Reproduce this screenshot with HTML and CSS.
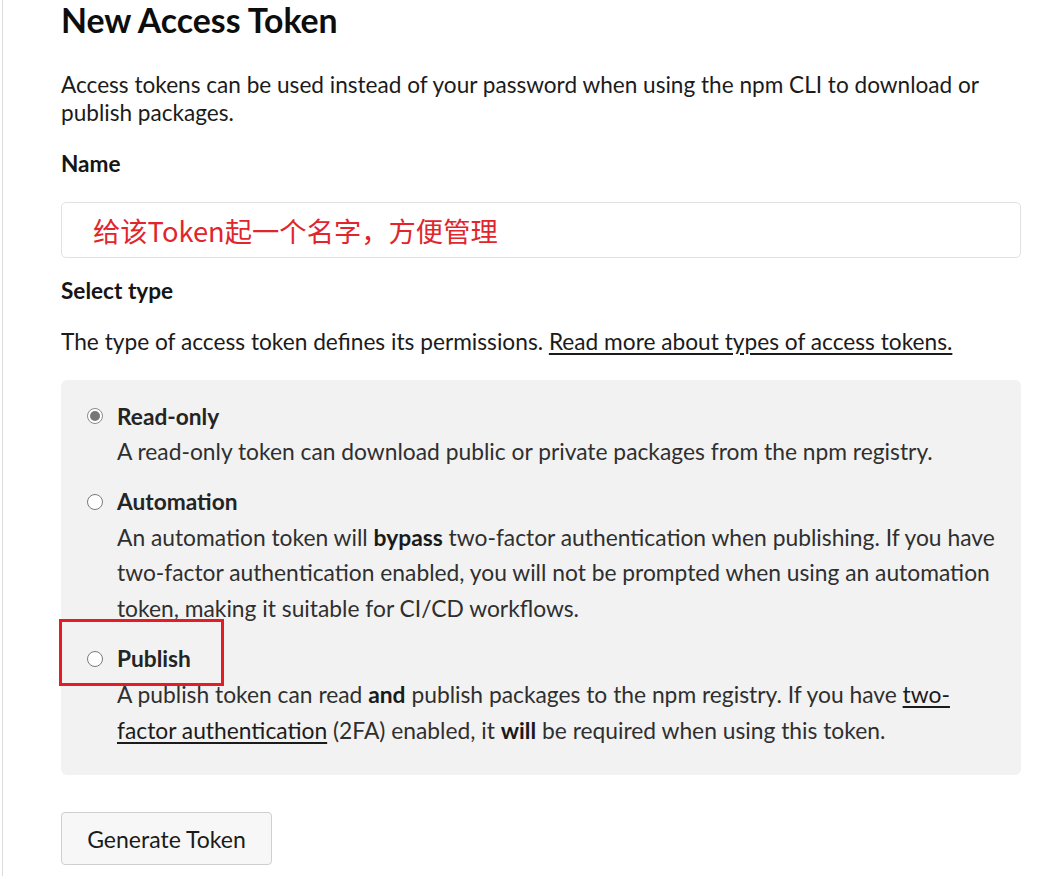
FILE: index.html
```html
<!DOCTYPE html>
<html lang="en">
<head>
<meta charset="utf-8">
<title>New Access Token</title>
<link rel="stylesheet" href="styles.css">
</head>
<body>
<div class="page">
  <main class="content">
    <h1 class="title">New Access Token</h1>
    <p class="intro">Access tokens can be used instead of your password when using the npm CLI to download or publish packages.</p>

    <label class="field-label">Name</label>
    <div class="text-input"><span class="annot-text">给该Token起一个名字，方便管理</span></div>

    <div class="field-label type-label">Select type</div>
    <p class="type-desc">The type of access token defines its permissions. <a class="link" href="#">Read more about types of access tokens.</a></p>

    <div class="options">
      <div class="option">
        <div class="option-head"><span class="radio checked"></span><span class="option-name">Read-only</span></div>
        <p class="option-desc">A read-only token can download public or private packages from the npm registry.</p>
      </div>
      <div class="option">
        <div class="option-head"><span class="radio"></span><span class="option-name">Automation</span></div>
        <p class="option-desc">An automation token will <b>bypass</b> two-factor authentication when publishing. If you have two-factor authentication enabled, you will not be prompted when using an automation token, making it suitable for CI/CD workflows.</p>
      </div>
      <div class="option">
        <div class="option-head"><span class="radio"></span><span class="option-name">Publish</span></div>
        <p class="option-desc">A publish token can read <b>and</b> publish packages to the npm registry. If you have <a class="link" href="#">two-factor authentication</a> (2FA) enabled, it <b>will</b> be required when using this token.</p>
      </div>
      <div class="highlight"></div>
    </div>

    <button class="btn">Generate Token</button>
  </main>
</div>
</body>
</html>
```

FILE: styles.css
```css
html, body {
  margin: 0;
  padding: 0;
  background: #fff;
}
body {
  font-family: Lato, "Liberation Sans", "Noto Sans CJK SC", sans-serif;
  color: #1b1b1b;
}
.page {
  margin-left: 2px;
  border-left: 1px solid #dcdcdc;
  min-height: 876px;
}
.content {
  width: 960px;
  padding-left: 58px;
  display: flex;
  flex-direction: column;
  align-items: flex-start;
}
.title {
  margin: 0;
  font-size: 33.8px;
  line-height: 40px;
  font-weight: 700;
  color: #0d0d0d;
  letter-spacing: 0;
}
.intro {
  margin: 31px 0 0;
  font-size: 22.6px;
  line-height: 28px;
}
.field-label {
  margin-top: 23px;
  font-size: 22.6px;
  line-height: 28px;
  font-weight: 700;
  color: #151515;
}
.text-input {
  margin-top: 24px;
  box-sizing: border-box;
  width: 960px;
  height: 56px;
  border: 1px solid #e2e2e2;
  border-radius: 5px;
  padding-left: 31px;
  display: flex;
  align-items: center;
}
.annot-text {
  font-family: "Noto Sans CJK SC", sans-serif;
  font-size: 27.3px;
  color: #e0262c;
  line-height: 34px;
}
.type-label {
  margin-top: 19px;
}
.type-desc {
  margin: 23px 0 0;
  font-size: 22.7px;
  line-height: 28px;
}
.link {
  color: #1b1b1b;
  text-decoration: underline;
  text-underline-offset: 3px;
}
.options {
  position: relative;
  margin-top: 24px;
  box-sizing: border-box;
  width: 960px;
  background: #f2f2f2;
  border-radius: 6px;
  padding: 18px 20px 27px 26px;
  display: flex;
  flex-direction: column;
  gap: 14px;
}
.option-head {
  display: flex;
  align-items: center;
  height: 36px;
}
.radio {
  box-sizing: border-box;
  width: 16px;
  height: 16px;
  border: 1px solid #7a7a7a;
  border-radius: 50%;
  background: #fff;
  margin-right: 14px;
  position: relative;
  flex: none;
}
.radio.checked {
  border-color: #8a8a8a;
}
.radio.checked::after {
  content: "";
  position: absolute;
  left: 2px;
  top: 2px;
  width: 10px;
  height: 10px;
  border-radius: 50%;
  background: #777;
}
.option-name {
  font-size: 22.7px;
  font-weight: 700;
  color: #242424;
}
.option-desc {
  margin: 0 0 0 30px;
  font-size: 22.8px;
  line-height: 35.7px;
  color: #2f2f2f;
}
.option-desc b {
  color: #1a1a1a;
}
.highlight {
  position: absolute;
  left: -2px;
  top: 239px;
  width: 159px;
  height: 61px;
  border: 3px solid #e41c23;
}
.btn {
  margin-top: 37px;
  box-sizing: border-box;
  width: 211px;
  height: 53px;
  background: #f7f7f7;
  border: 1px solid #cfcfcf;
  border-radius: 4px;
  font-family: Lato, "Liberation Sans", sans-serif;
  font-size: 23px;
  color: #1b1b1b;
  padding: 0;
}
```
